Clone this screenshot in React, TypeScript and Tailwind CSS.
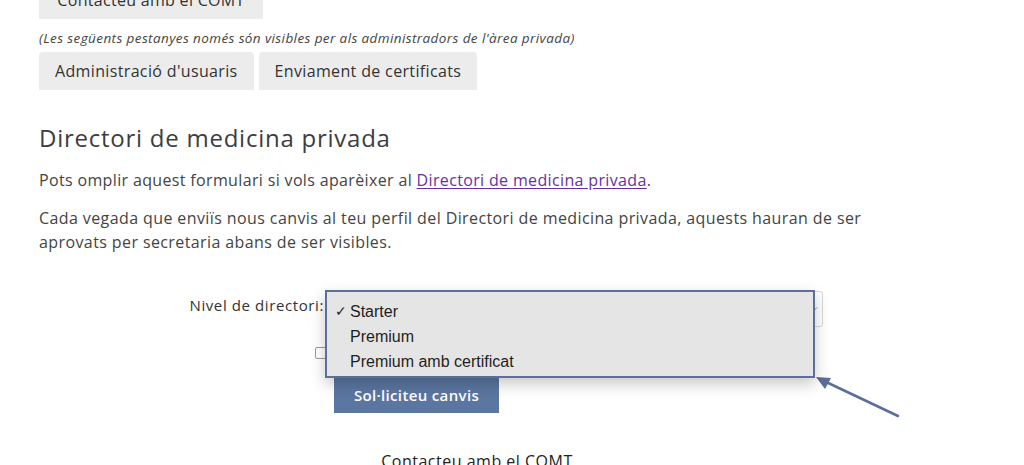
import React from "react";

const OPTIONS = [
  { label: "Starter", checked: true },
  { label: "Premium", checked: false },
  { label: "Premium amb certificat", checked: false },
];

const TABS = ["Administració d'usuaris", "Enviament de certificats"];

export default function App() {
  return (
    <div className="relative w-full h-[465px] bg-white overflow-hidden font-['Open_Sans',sans-serif] text-[#444]">
      <div className="px-[39px]">
        {/* Top tab, scrolled partly off screen */}
        <div className="-mt-[19px] h-[38px] w-[224px] flex items-center justify-center bg-[#ececec] rounded-t-[3px] text-[16px] tracking-[0.3px] text-[#333]">
          Contacteu amb el COMT
        </div>

        <p className="mt-[10px] h-[18px] text-[13.5px] italic tracking-[0.4px] leading-[18px] text-[#444]">
          (Les següents pestanyes només són visibles per als administradors de l'àrea privada)
        </p>

        <div className="mt-[5px] flex gap-[5px]">
          {TABS.map((t) => (
            <div
              key={t}
              className="h-[38px] px-4 flex items-center bg-[#ececec] rounded-t-[4px] text-[16px] tracking-[0.35px] text-[#333]"
            >
              {t}
            </div>
          ))}
        </div>

        <h2 className="mt-[32px] text-[24px] leading-[32px] font-medium tracking-[0.75px] text-[#3d3d3d]">
          Directori de medicina privada
        </h2>

        <p className="mt-[14px] text-[16px] leading-[24px] tracking-[0.35px]">
          Pots omplir aquest formulari si vols aparèixer al{" "}
          <a href="#" className="text-[#6a2fa3] underline underline-offset-2">
            Directori de medicina privada
          </a>
          .
        </p>

        <p className="mt-[14px] w-[845px] text-[16px] leading-[24px] tracking-[0.4px]">
          Cada vegada que enviïs nous canvis al teu perfil del Directori de medicina privada, aquests hauran de ser
          aprovats per secretaria abans de ser visibles.
        </p>

        {/* Form */}
        <div className="mt-[37px] flex items-center">
          <label className="w-[286px] mb-[8px] pr-[1px] text-right text-[15px] tracking-[0.6px] text-[#333]">
            Nivel de directori:
          </label>
          <div className="relative ml-[4px] w-[494px] h-[36px] bg-white border border-[#d8d8d8] rounded-[3px] flex items-center justify-end pr-[4px]">
            <svg width="8" height="6" viewBox="0 0 8 6" className="text-[#888]">
              <path d="M1 1.5 L4 4.5 L7 1.5" fill="none" stroke="currentColor" strokeWidth="1" />
            </svg>

            {/* Open dropdown list */}
            <div className="absolute left-[-5px] top-[-2px] z-10 w-[490px] h-[88px] bg-[#e5e5e5] border-2 border-[#5b6f98] shadow-[0_6px_14px_rgba(0,0,0,0.22)] pt-[7px] font-['Liberation_Sans',sans-serif] text-[16px] text-[#1f1f1f]">
              {OPTIONS.map((o) => (
                <div key={o.label} className="h-[25px] flex items-center">
                  <span className="w-[23px] pl-[8px] text-[14px]">{o.checked ? "✓" : ""}</span>
                  <span>{o.label}</span>
                </div>
              ))}
            </div>
          </div>
        </div>

        <div className="mt-[19px] ml-[276px] flex items-center h-[14px]">
          <span className="w-[12px] h-[12px] border border-[#999] rounded-[2px] bg-white" />
        </div>

        <button className="mt-[17px] ml-[295px] w-[165px] h-[36px] bg-[#5b76a1] text-white text-[15px] font-semibold tracking-[0.35px]">
          Sol·liciteu canvis
        </button>

        <p className="mt-[36px] text-center pr-[70px] text-[16px] tracking-[0.5px] text-[#222]">Contacteu amb el COMT</p>
      </div>

      {/* Annotation arrow */}
      <svg className="absolute left-0 top-0 pointer-events-none" width="1024" height="465">
        <line x1="898" y1="416" x2="824" y2="381" stroke="#5b6f98" strokeWidth="2.5" strokeLinecap="round" />
        <polygon points="816,377 831,378 825,389" fill="#5b6f98" />
      </svg>
    </div>
  );
}
